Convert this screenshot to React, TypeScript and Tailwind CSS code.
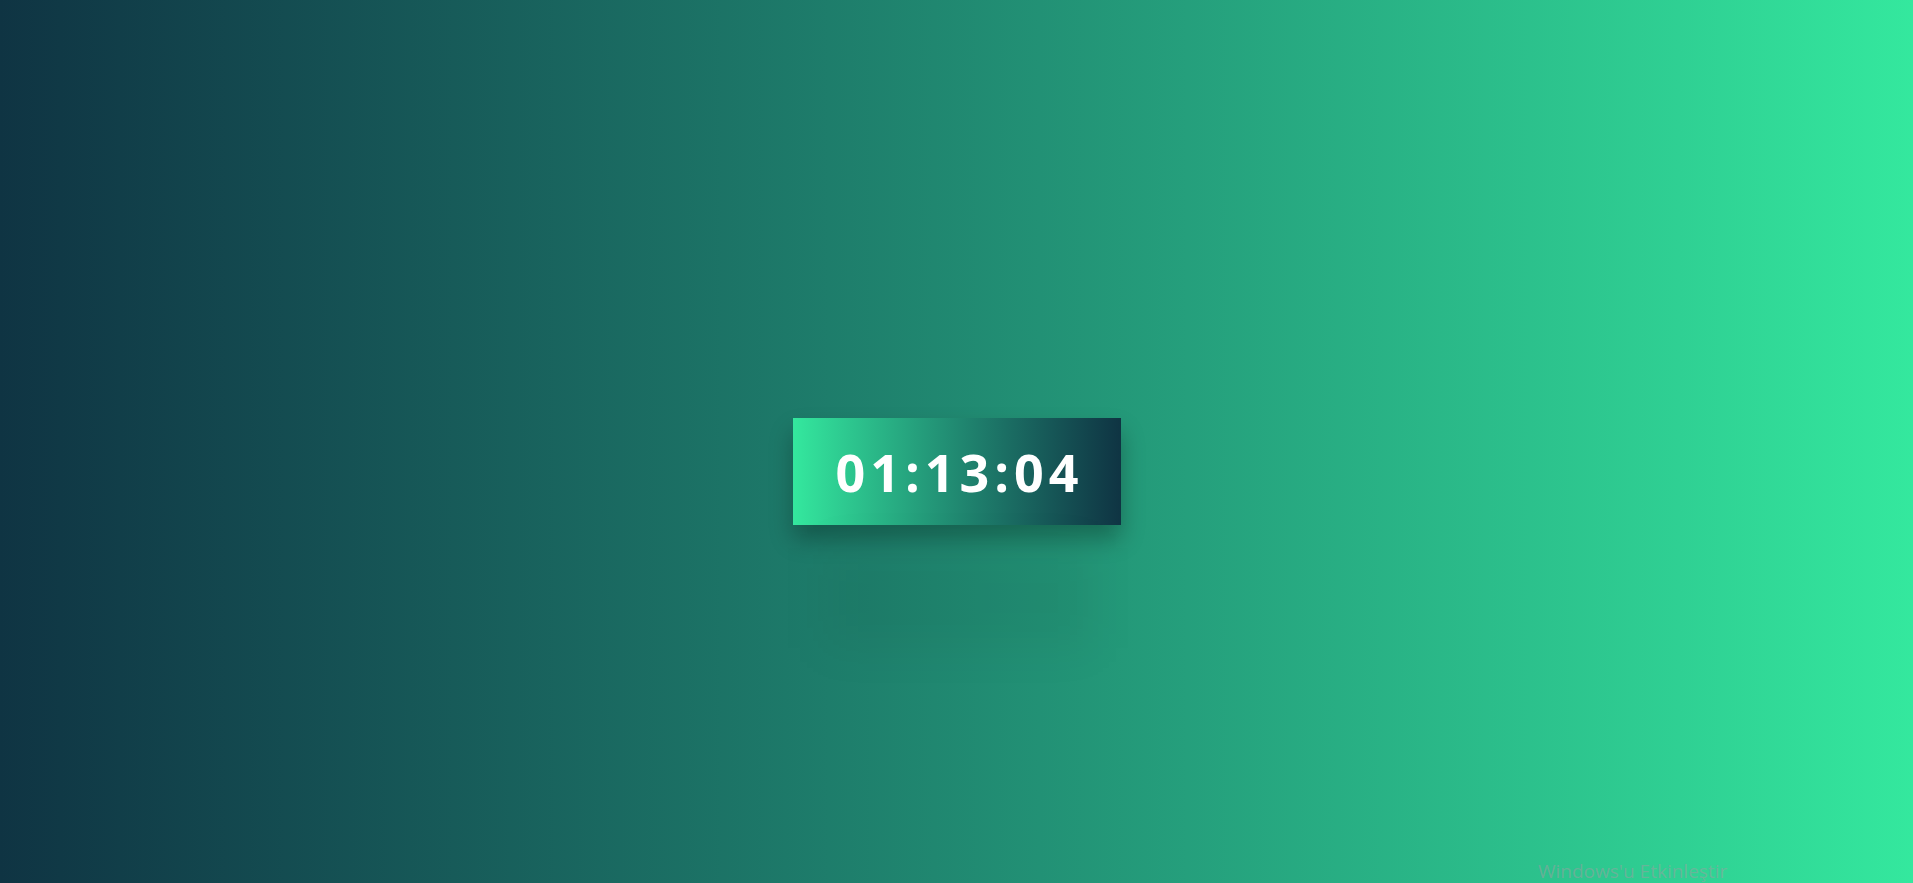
import React from "react";

function Clock({ time }: { time: string }) {
  return (
    <div className="relative">
      <div className="flex h-[107px] w-[328px] items-center justify-center bg-gradient-to-r from-[#34e89e] to-[#0f3443] shadow-[0_14px_22px_rgba(0,0,0,0.28)]">
        <span className="pl-[6px] font-['Open_Sans',sans-serif] text-[52px] font-bold leading-none tracking-[5px] text-white">
          {time}
        </span>
      </div>
      {/* faint reflection under the box */}
      <div className="pointer-events-none absolute left-[30px] top-[130px] h-[100px] w-[270px] bg-[rgba(0,0,0,0.045)] blur-[22px]" />
    </div>
  );
}

export default function App() {
  return (
    <div className="relative h-[883px] w-full overflow-hidden bg-gradient-to-r from-[#0f3443] to-[#34e89e]">
      <div className="flex h-full items-start justify-center pt-[418px]">
        <Clock time="01:13:04" />
      </div>
      <div className="absolute left-[1538px] top-[860px] font-['Open_Sans',sans-serif] text-[19px] leading-[22px] text-[rgba(150,160,160,0.55)]">
        Windows'u Etkinleştir
      </div>
    </div>
  );
}
